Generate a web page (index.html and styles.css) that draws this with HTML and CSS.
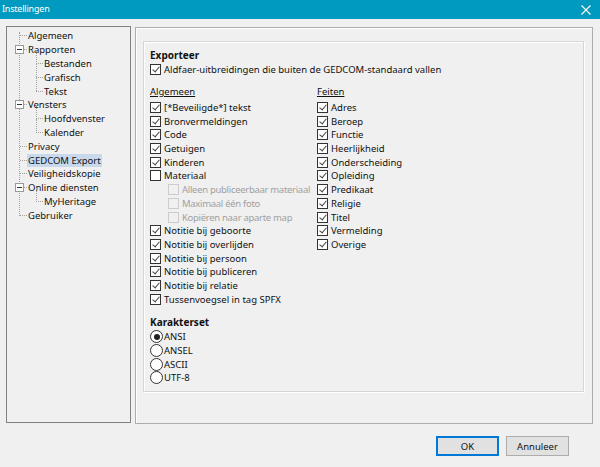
FILE: index.html
```html
<!DOCTYPE html>
<html>
<head>
<meta charset="utf-8">
<link rel="stylesheet" href="styles.css">
</head>
<body>
<div class="window">
  <div class="titlebar">
    <span class="title">Instellingen</span>
    <svg class="close" width="10" height="10" viewBox="0 0 10 10"><path d="M0.5 0.5L9.5 9.5M9.5 0.5L0.5 9.5" stroke="#fff" stroke-width="1.1"/></svg>
  </div>
  <div class="main">
    <div class="tree">
      <div class="vline"></div>
      <div class="node"><span class="h"></span><span class="lbl">Algemeen</span></div>
      <div class="node"><span class="h"><span class="box"></span></span><span class="lbl">Rapporten</span></div>
      <div class="node child"><span class="h"></span><span class="lbl">Bestanden</span></div>
      <div class="node child"><span class="h"></span><span class="lbl">Grafisch</span></div>
      <div class="node child last"><span class="h"></span><span class="lbl">Tekst</span></div>
      <div class="node"><span class="h"><span class="box"></span></span><span class="lbl">Vensters</span></div>
      <div class="node child"><span class="h"></span><span class="lbl">Hoofdvenster</span></div>
      <div class="node child last"><span class="h"></span><span class="lbl">Kalender</span></div>
      <div class="node"><span class="h"></span><span class="lbl">Privacy</span></div>
      <div class="node"><span class="h"></span><span class="lbl sel">GEDCOM Export</span></div>
      <div class="node"><span class="h"></span><span class="lbl">Veiligheidskopie</span></div>
      <div class="node"><span class="h"><span class="box"></span></span><span class="lbl">Online diensten</span></div>
      <div class="node child last"><span class="h"></span><span class="lbl">MyHeritage</span></div>
      <div class="node lastroot"><span class="h"></span><span class="lbl">Gebruiker</span></div>
    </div>
    <div class="panel">
      <div class="group">
        <div class="head">Exporteer</div>
        <div class="row"><span class="cb on"></span>Aldfaer-uitbreidingen die buiten de GEDCOM-standaard vallen</div>
        <div class="cols">
          <div class="col">
            <div class="sub">Algemeen</div>
            <div class="row"><span class="cb on"></span>[*Beveiligde*] tekst</div>
            <div class="row"><span class="cb on"></span>Bronvermeldingen</div>
            <div class="row"><span class="cb on"></span>Code</div>
            <div class="row"><span class="cb on"></span>Getuigen</div>
            <div class="row"><span class="cb on"></span>Kinderen</div>
            <div class="row"><span class="cb"></span>Materiaal</div>
            <div class="row dis"><span class="cb"></span>Alleen publiceerbaar materiaal</div>
            <div class="row dis"><span class="cb"></span>Maximaal één foto</div>
            <div class="row dis"><span class="cb"></span>Kopiëren naar aparte map</div>
            <div class="row"><span class="cb on"></span>Notitie bij geboorte</div>
            <div class="row"><span class="cb on"></span>Notitie bij overlijden</div>
            <div class="row"><span class="cb on"></span>Notitie bij persoon</div>
            <div class="row"><span class="cb on"></span>Notitie bij publiceren</div>
            <div class="row"><span class="cb on"></span>Notitie bij relatie</div>
            <div class="row"><span class="cb on"></span>Tussenvoegsel in tag SPFX</div>
          </div>
          <div class="col">
            <div class="sub">Feiten</div>
            <div class="row"><span class="cb on"></span>Adres</div>
            <div class="row"><span class="cb on"></span>Beroep</div>
            <div class="row"><span class="cb on"></span>Functie</div>
            <div class="row"><span class="cb on"></span>Heerlijkheid</div>
            <div class="row"><span class="cb on"></span>Onderscheiding</div>
            <div class="row"><span class="cb on"></span>Opleiding</div>
            <div class="row"><span class="cb on"></span>Predikaat</div>
            <div class="row"><span class="cb on"></span>Religie</div>
            <div class="row"><span class="cb on"></span>Titel</div>
            <div class="row"><span class="cb on"></span>Vermelding</div>
            <div class="row"><span class="cb on"></span>Overige</div>
          </div>
        </div>
        <div class="head kar">Karakterset</div>
        <div class="row"><span class="rb on"></span>ANSI</div>
        <div class="row"><span class="rb"></span>ANSEL</div>
        <div class="row"><span class="rb"></span>ASCII</div>
        <div class="row"><span class="rb"></span>UTF-8</div>
      </div>
    </div>
  </div>
  <div class="buttons">
    <div class="btn def">OK</div>
    <div class="btn">Annuleer</div>
  </div>
</div>
</body>
</html>
```
FILE: styles.css
```css
* { box-sizing: border-box; }
html, body { margin: 0; padding: 0; }
body {
  width: 600px; height: 467px; overflow: hidden;
  background: #f0f0f0;
  font-family: "Noto Sans", "DejaVu Sans", sans-serif;
  font-size: 9.5px;
  color: #111;
}
.window { width: 600px; height: 467px; display: flex; flex-direction: column; }
.titlebar {
  height: 19px; background: #0099bf; color: #fff;
  display: flex; align-items: center; justify-content: space-between;
  padding: 0 9px 0 2px;
  font-size: 9px;
  letter-spacing: -0.2px;
}
.title { position: relative; top: -1px; }
.main { display: flex; padding: 7px 7px 0 6px; gap: 4px; height: 404px; }
.tree {
  position: relative;
  width: 125px; height: 397px;
  border: 1px solid #828282;
  background: #f0f0f0;
  padding-top: 2px;
}
.vline {
  position: absolute; left: 12px; top: 5px; height: 184px;
  border-left: 1px dotted #a0a0a0;
}
.node { display: flex; align-items: center; height: 13.8px; position: relative; padding-left: 13px; }
.node.child { padding-left: 29px; }
.node .h {
  width: 7px; height: 1px; border-top: 1px dotted #a0a0a0; position: relative;
}
.node.child::before {
  content: ""; position: absolute; left: 29px; top: -7px; height: 14px;
  border-left: 1px dotted #a0a0a0;
}
.node .box {
  position: absolute; left: -5px; top: -5px;
  width: 9px; height: 9px; border: 1px solid #999; background: #fff;
}
.node .box::after {
  content: ""; position: absolute; left: 1px; top: 3px; width: 5px; height: 1px; background: #333;
}
.lbl { padding: 0 1px; line-height: 13px; white-space: nowrap; }
.lbl.sel { background: #c9d9ec; }
.panel {
  flex: 1; height: 397px; margin-top: 1px;
  border: 1px solid #adadad;
  box-shadow: inset 1px 1px 0 #fff;
  padding: 13px 8px 0 7px;
}
.group {
  height: 351px;
  border: 1px solid #d5d5d5;
  box-shadow: 1px 1px 0 #fff, inset 1px 1px 0 #fff;
  padding: 5px 6px;
}
.head { font-weight: bold; height: 16px; line-height: 16px; font-size: 10px; }
.row { display: flex; align-items: center; height: 13.7px; white-space: nowrap; }
.cb {
  width: 11px; height: 11px; border: 1px solid #333; background: #fff;
  margin-right: 3px; flex: none; position: relative;
}
.cb.on::after {
  content: ""; position: absolute; left: 3px; top: 0px;
  width: 3px; height: 6px;
  border-right: 1px solid #444; border-bottom: 1px solid #444;
  transform: rotate(40deg);
}
.row.dis { color: #a0a0a0; padding-left: 18px; letter-spacing: -0.3px; }
.row.dis .cb { border-color: #cccccc; background: #f0f0f0; }
.cols { display: flex; margin-top: 8px; }
.col { width: 167px; }
.sub { text-decoration: underline; height: 15px; line-height: 13px; margin-bottom: 1px; }
.kar { margin-top: 8px; }
.rb {
  width: 13px; height: 13px; border: 1px solid #333; background: #fff; border-radius: 50%;
  margin-right: 1px; flex: none; position: relative;
}
.rb.on::after {
  content: ""; position: absolute; left: 2.5px; top: 2.5px; width: 6px; height: 6px;
  border-radius: 50%; background: #222;
}
.buttons { display: flex; justify-content: flex-end; gap: 7px; padding: 13px 31px 0 0; }
.btn {
  width: 63px; height: 20px; background: #e1e1e1; border: 1px solid #adadad;
  display: flex; align-items: center; justify-content: center;
}
.btn.def { border: 1px solid #0078d7; box-shadow: inset 0 0 0 1px #0078d7; }
```
